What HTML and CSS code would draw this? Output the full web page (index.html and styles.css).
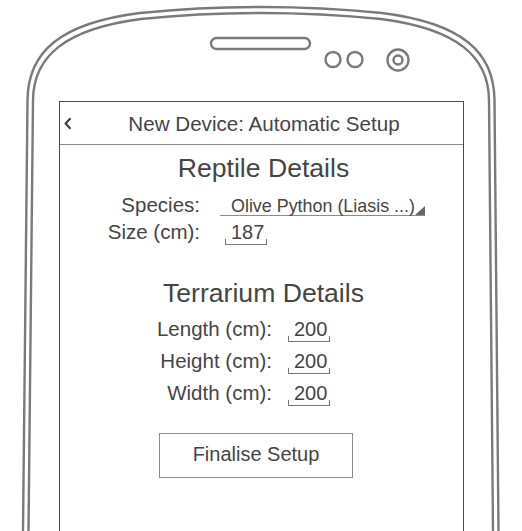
FILE: index.html
```html
<!DOCTYPE html>
<html>
<head>
<meta charset="utf-8">
<link rel="stylesheet" href="styles.css">
</head>
<body>
<div class="phone">
  <svg class="frame" width="522" height="531" viewBox="0 0 522 531" xmlns="http://www.w3.org/2000/svg">
    <g fill="none" stroke="#7a7a7a" stroke-width="2.4" stroke-linecap="round">
      <path d="M 23 531 L 27.5 100 C 28 52 60 23 140 13 Q 261 1 382 13 C 462 23 494 52 494.5 100 L 498.5 531"/>
      <path d="M 28.5 531 L 33 100 C 33.5 57 64 29 141 19 Q 261 7 381 19 C 458 29 488.5 57 489 100 L 493 531"/>
      <rect x="211" y="38" width="99" height="11" rx="5.5"/>
      <circle cx="333" cy="59.5" r="7.5"/>
      <circle cx="355" cy="59.5" r="7.5"/>
      <circle cx="398" cy="60" r="10.5"/>
      <circle cx="398" cy="60" r="4.5"/>
    </g>
  </svg>
  <div class="screen">
    <div class="header">
      <svg class="back" width="8" height="13" viewBox="0 0 8 13"><path d="M6.5 1.2 L1.6 6.5 L6.5 11.8" fill="none" stroke="#3a3a3a" stroke-width="2"/></svg>
      <div class="title">New Device: Automatic Setup</div>
    </div>
    <div class="content">
      <h2 class="section-title">Reptile Details</h2>
      <div class="form-grid reptile">
        <div class="label">Species:</div>
        <div class="value"><span class="dropdown">Olive Python (Liasis ...)</span></div>
        <div class="label">Size (cm):</div>
        <div class="value"><span class="field size-field">187</span></div>
      </div>
      <h2 class="section-title terrarium-title">Terrarium Details</h2>
      <div class="form-grid terrarium">
        <div class="label">Length (cm):</div>
        <div class="value"><span class="field">200</span></div>
        <div class="label">Height (cm):</div>
        <div class="value"><span class="field">200</span></div>
        <div class="label">Width (cm):</div>
        <div class="value"><span class="field">200</span></div>
      </div>
      <div class="button">Finalise Setup</div>
    </div>
  </div>
</div>
</body>
</html>
```

FILE: styles.css
```css
html, body {
  margin: 0;
  padding: 0;
  background: #ffffff;
}

body {
  font-family: "Liberation Sans", Arial, sans-serif;
  color: #454545;
}

.phone {
  position: relative;
  width: 522px;
  height: 531px;
  overflow: hidden;
}

.frame {
  position: absolute;
  left: 0;
  top: 0;
}

.screen {
  position: relative;
  box-sizing: border-box;
  margin-left: 59px;
  margin-top: 101px;
  width: 405px;
  height: 460px;
  border: 1px solid #4a4a4a;
  border-bottom: none;
  background: #ffffff;
}

.header {
  display: flex;
  align-items: center;
  height: 42px;
  border-bottom: 1px solid #8a8a8a;
  padding-left: 4px;
}

.back {
  flex: none;
  margin-top: 1px;
}

.title {
  flex: 1;
  text-align: center;
  font-size: 20.6px;
  line-height: 42px;
  padding-right: 7px;
  margin-top: 1px;
}

.content {
  padding-top: 8px;
}

.section-title {
  margin: 0;
  font-weight: normal;
  font-size: 26.6px;
  line-height: 30px;
  text-align: center;
  padding-left: 4px;
}

.form-grid {
  display: grid;
  font-size: 20.5px;
}

.reptile {
  margin-top: 8px;
  grid-template-columns: 140px auto;
  column-gap: 20px;
  grid-auto-rows: 27px;
}

.terrarium-title {
  margin-top: 33px;
  padding-left: 4px;
}

.terrarium {
  margin-top: 5px;
  grid-template-columns: 212px auto;
  column-gap: 16px;
  grid-auto-rows: 32px;
}

.label {
  text-align: right;
  align-self: center;
}

.reptile .label, .reptile .value {
  line-height: 27px;
}

.terrarium .label, .terrarium .value {
  line-height: 32px;
}

.dropdown {
  position: relative;
  display: inline-block;
  box-sizing: border-box;
  width: 205px;
  padding-left: 11px;
  font-size: 17.9px;
  line-height: 17px;
  border-bottom: 1px solid #8a8a8a;
}

.dropdown::after {
  content: "";
  position: absolute;
  right: 0;
  bottom: 0;
  width: 0;
  height: 0;
  border-left: 10px solid transparent;
  border-bottom: 9px solid #666666;
}

.field {
  display: inline-block;
  font-size: 20px;
  line-height: 20px;
  padding: 0 3px 2px 6px;
  border-bottom: 1px solid #777777;
  background:
    linear-gradient(#777777, #777777) left bottom / 1px 5px no-repeat,
    linear-gradient(#777777, #777777) right bottom / 1px 5px no-repeat;
}

.size-field {
  margin-left: 5px;
}

.button {
  box-sizing: border-box;
  margin-top: 24px;
  margin-left: 99px;
  width: 194px;
  height: 45px;
  border: 1px solid #8a8a8a;
  font-size: 20px;
  line-height: 41px;
  text-align: center;
}
```
